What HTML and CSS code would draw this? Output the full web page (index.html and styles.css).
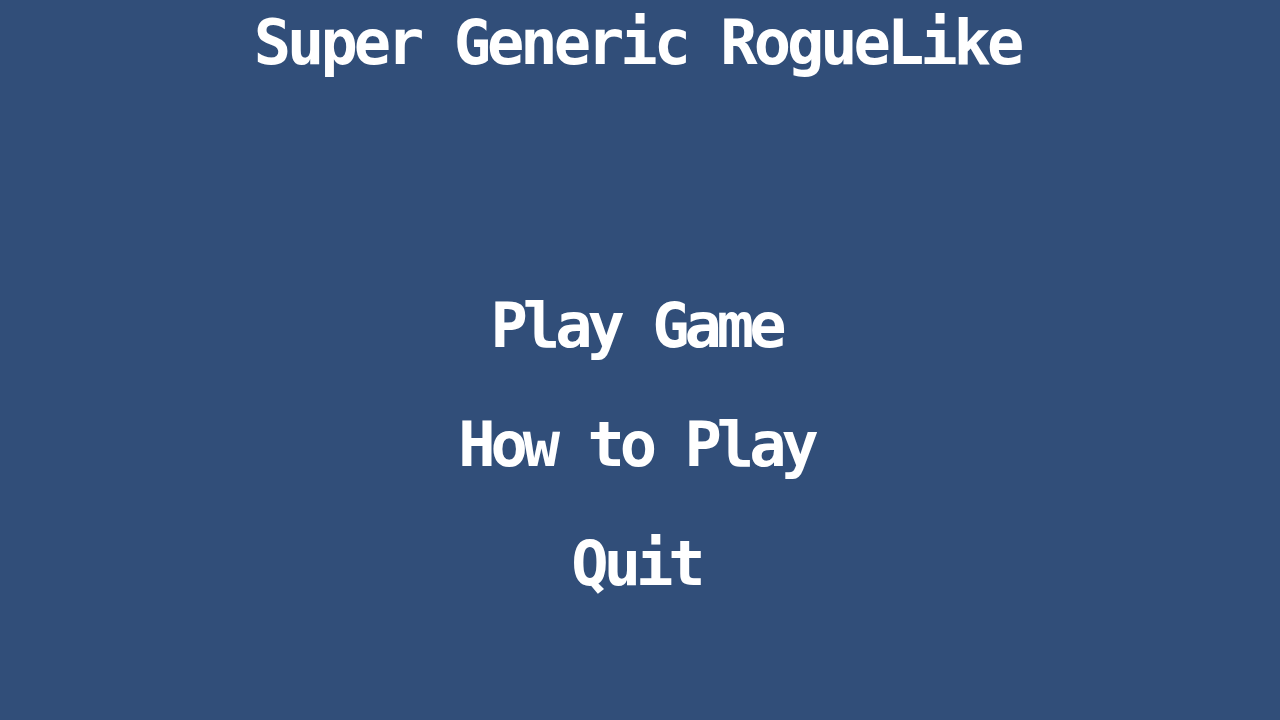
FILE: index.html
```html
<!DOCTYPE html>
<html lang="en">
  <head>
    <meta charset="UTF-8" />
    <meta name="viewport" content="width=device-width, initial-scale=1.0" />
    <title>Super Generic RogueLike</title>
    <link rel="stylesheet" href="styles.css">
  </head>

  <body>
    <div class="screen">
      <h1 class="title">Super Generic RogueLike</h1>
      <ul class="menu">
        <li class="items"><a href="#">Play Game</a></li>
        <li class="items"><a href="#">How to Play</a></li>
        <li class="items"><a href="#">Quit</a></li>
      </ul>
    </div>
  </body>
</html>
```

FILE: styles.css
```css
* {
  padding: 0;
  margin: 0;
}

html,
body {
  width: 100%;
  height: 100%;
}

body {
  background-color: #314e79;
  color: #fff;
  font-family: "DejaVu Sans Mono", "Liberation Mono", monospace;
  font-weight: bold;
}

.screen {
  display: flex;
  flex-direction: column;
  align-items: center;
  height: 100%;
  padding-top: 12px;
  box-sizing: border-box;
}

.title {
  font-size: 62px;
  line-height: 62px;
  letter-spacing: -4px;
  margin-left: -6px;
}

/* 菜单项之间留出较大的间距 */
.menu {
  list-style: none;
  display: flex;
  flex-direction: column;
  align-items: center;
  gap: 57px;
  margin-top: 221px;
  margin-left: -8px;
}

.menu > li {
  font-size: 62px;
  line-height: 62px;
  letter-spacing: -5px;
}

.menu a {
  color: #fff;
  text-decoration: none;
}
```
